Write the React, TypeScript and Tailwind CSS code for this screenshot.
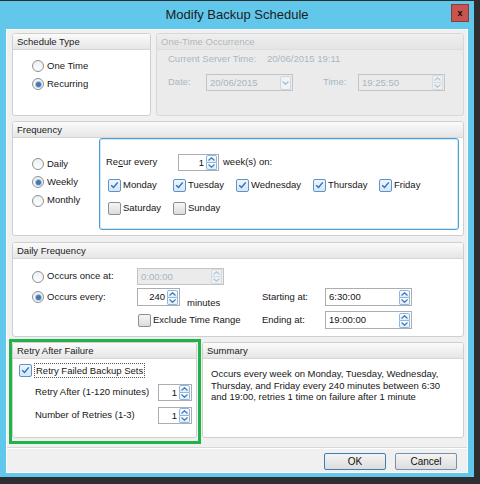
import { ReactNode } from 'react'

function Chevron({ up, color }: { up?: boolean; color: string }) {
  return (
    <svg width="7" height="4" viewBox="0 0 7 4" className="block">
      <path
        d={up ? 'M0.5 3.5 L3.5 0.7 L6.5 3.5' : 'M0.5 0.5 L3.5 3.3 L6.5 0.5'}
        fill="none"
        stroke={color}
        strokeWidth="1.2"
      />
    </svg>
  )
}

function Spin({ disabled }: { disabled?: boolean }) {
  const color = disabled ? '#b8c8d8' : '#3d7cc2'
  const box = disabled
    ? 'border-[#d3dbe3] bg-[#eef0f2]'
    : 'border-[#8fb6dc] bg-linear-to-b from-white to-[#e2edf8]'
  return (
    <div className="flex flex-col w-[11px] h-[15px] mr-px shrink-0">
      <div className={`flex-1 flex items-center justify-center border rounded-t-[2px] ${box}`}>
        <Chevron up color={color} />
      </div>
      <div className={`flex-1 flex items-center justify-center border border-t-0 rounded-b-[2px] ${box}`}>
        <Chevron color={color} />
      </div>
    </div>
  )
}

function Field({
  value,
  className,
  right,
  disabled,
  dropdown,
}: {
  value: string
  className: string
  right?: boolean
  disabled?: boolean
  dropdown?: boolean
}) {
  return (
    <div
      className={`flex items-center border shrink-0 ${
        disabled ? 'bg-[#ebebeb] border-[#c4c4c4] text-[#a9b5c1]' : 'bg-white border-[#abadb3] text-[#111]'
      } ${className}`}
    >
      <span className={`flex-1 leading-[12px] ${right ? 'text-right pr-[2px]' : 'pl-[3px]'}`}>{value}</span>
      {dropdown ? (
        <div className="flex items-center justify-center w-[11px] h-[14px] mr-px border border-[#c9d8e6] rounded-[2px] bg-[#f1f4f7]">
          <Chevron color="#a9bccf" />
        </div>
      ) : (
        <Spin disabled={disabled} />
      )}
    </div>
  )
}

function Radio({ checked }: { checked?: boolean }) {
  return (
    <span className="flex items-center justify-center w-[12px] h-[12px] rounded-full border border-[#8b9096] bg-linear-to-b from-[#f0f0f0] to-[#fdfdfd] shrink-0">
      {checked && <span className="w-[5px] h-[5px] rounded-full bg-[#4478ad] ring-1 ring-[#a9c6e2]" />}
    </span>
  )
}

function Check({ checked }: { checked?: boolean }) {
  return (
    <span
      className={`flex items-center justify-center w-[13px] h-[13px] rounded-[2px] border shrink-0 ${
        checked
          ? 'border-[#5e93c9] bg-linear-to-b from-[#eef5fc] to-[#d6e7f7]'
          : 'border-[#8e8f90] bg-linear-to-b from-[#f6f6f6] to-[#dcdcdc]'
      }`}
    >
      {checked && (
        <svg width="9" height="8" viewBox="0 0 9 8">
          <path d="M1.2 4.2 L3.5 6.4 L7.8 1.4" fill="none" stroke="#2c6fba" strokeWidth="1.4" />
        </svg>
      )}
    </span>
  )
}

function Box({
  title,
  className,
  disabled,
  children,
}: {
  title: string
  className: string
  disabled?: boolean
  children?: ReactNode
}) {
  return (
    <div
      className={`flex flex-col border rounded-[3px] overflow-hidden shrink-0 ${
        disabled ? 'border-[#d8d8d8] bg-[#ebebeb]' : 'border-[#cfcfcf] bg-white'
      } ${className}`}
    >
      <div
        className={`h-[16px] shrink-0 px-[4px] leading-[15px] border-b ${
          disabled
            ? 'border-[#dedede] bg-linear-to-b from-[#efefef] to-[#e4e4e4] text-[#b0b8c0]'
            : 'border-[#d6d6d6] bg-linear-to-b from-[#fbfbfb] to-[#e6e6e6] text-[#1b1b1b]'
        }`}
      >
        {title}
      </div>
      {children}
    </div>
  )
}

const days = [
  { name: 'Monday', on: true, w: 'w-[65px]' },
  { name: 'Tuesday', on: true, w: 'w-[63px]' },
  { name: 'Wednesday', on: true, w: 'w-[77px]' },
  { name: 'Thursday', on: true, w: 'w-[66px]' },
  { name: 'Friday', on: true, w: '' },
]

export default function App() {
  return (
    <div className="w-[480px] h-[484px] bg-[#2e2e30] pt-px font-['Liberation_Sans',Arial,sans-serif] text-[9.5px] text-[#161616]">
      <div className="w-[474px] h-[476px] bg-[#62c8eb] flex flex-col">
        {/* title bar */}
        <div className="h-[28px] grid grid-cols-[1fr_auto_1fr] items-start shrink-0">
          <div />
          <div className="mt-[6px] text-[13px] leading-[16px] text-[#1c1c1c]">Modify Backup Schedule</div>
          <div className="flex justify-end pr-[5px] pt-[3px]">
            <div className="w-[18px] h-[18px] border border-[#8e3a37] bg-[#c75450] flex items-center justify-center text-[9px] font-bold leading-none text-[#1a0505]">
              x
            </div>
          </div>
        </div>

        {/* client area */}
        <div className="mx-[6px] h-[444px] border border-white bg-[#f0f0f0] flex flex-col">
          <div className="flex flex-col gap-[5px] pl-[5px] pt-[3px]">
            {/* row 1 */}
            <div className="flex gap-[5px]">
              <Box title="Schedule Type" className="w-[139px] h-[83px]">
                <div className="flex flex-col pt-[7px] pl-[19px]">
                  <div className="flex items-center h-[18px] gap-[3px]">
                    <Radio />
                    <span>One Time</span>
                  </div>
                  <div className="flex items-center h-[18px] gap-[3px]">
                    <Radio checked />
                    <span>Recurring</span>
                  </div>
                </div>
              </Box>
              <Box title="One-Time Occurrence" disabled className="w-[308px] h-[83px]">
                <div className="flex flex-col pl-[11px] pt-[3px] text-[#a9b7c5]">
                  <div className="flex h-[12px] leading-[12px]">
                    <span className="w-[99px]">Current Server Time:</span>
                    <span>20/06/2015 19:11</span>
                  </div>
                  <div className="flex items-center h-[17px] mt-[9px]">
                    <span className="w-[38px]">Date:</span>
                    <Field value="20/06/2015" disabled dropdown className="w-[87px] h-[17px]" />
                    <span className="ml-[30px] w-[35px]">Time:</span>
                    <Field value="19:25:50" disabled className="w-[87px] h-[17px]" />
                  </div>
                </div>
              </Box>
            </div>

            {/* frequency */}
            <Box title="Frequency" className="w-[452px] h-[115px]">
              <div className="flex flex-1 pb-[5px] pr-[4px]">
                <div className="w-[86px] flex flex-col pl-[19px] pt-[17px]">
                  <div className="flex items-center h-[18px] gap-[3px]">
                    <Radio />
                    <span>Daily</span>
                  </div>
                  <div className="flex items-center h-[18px] gap-[3px]">
                    <Radio checked />
                    <span>Weekly</span>
                  </div>
                  <div className="flex items-center h-[19px] gap-[3px]">
                    <Radio />
                    <span>Monthly</span>
                  </div>
                </div>
                <div className="flex-1 border border-[#4f9fd6] rounded-[3px] shadow-[inset_0_0_0_1px_#cfe6f6] flex flex-col pl-[6px] pt-[15px]">
                  <div className="flex items-center h-[17px]">
                    <span className="w-[72px]">
                      Re<span className="underline">c</span>ur every
                    </span>
                    <Field value="1" right className="w-[41px] h-[17px]" />
                    <span className="ml-[4px]">week(s) on:</span>
                  </div>
                  <div className="flex flex-col gap-[5px] mt-[5px] pl-[2px]">
                    <div className="flex items-center h-[18px]">
                      {days.map((d) => (
                        <div key={d.name} className={`flex items-center gap-[2px] ${d.w}`}>
                          <Check checked={d.on} />
                          <span>{d.name}</span>
                        </div>
                      ))}
                    </div>
                    <div className="flex items-center h-[18px]">
                      <div className="flex items-center gap-[2px] w-[65px]">
                        <Check />
                        <span>Saturday</span>
                      </div>
                      <div className="flex items-center gap-[2px]">
                        <Check />
                        <span>Sunday</span>
                      </div>
                    </div>
                  </div>
                </div>
              </div>
            </Box>

            {/* daily frequency */}
            <Box title="Daily Frequency" className="w-[452px] h-[95px] mt-px">
              <div className="flex flex-col pl-[19px]">
                <div className="flex items-center h-[17px] mt-[9px]">
                  <div className="flex items-center gap-[3px] w-[105px]">
                    <Radio />
                    <span>Occurs once at:</span>
                  </div>
                  <Field value="0:00:00" disabled className="w-[87px] h-[17px]" />
                </div>
                <div className="flex items-center h-[18px] mt-[3px]">
                  <div className="flex w-[230px] h-full items-center">
                    <div className="flex items-center gap-[3px] w-[105px]">
                      <Radio checked />
                      <span>Occurs every:</span>
                    </div>
                    <Field value="240" right className="w-[43px] h-[18px]" />
                    <span className="ml-[7px] self-start mt-[9px] leading-[12px]">minutes</span>
                  </div>
                  <span className="w-[63px]">Starting at:</span>
                  <Field value="6:30:00" className="w-[87px] h-[18px]" />
                </div>
                <div className="flex items-center h-[18px] mt-[5px]">
                  <div className="flex w-[230px] items-center pl-[106px] gap-[2px]">
                    <Check />
                    <span>Exclude Time Range</span>
                  </div>
                  <span className="w-[63px]">Ending at:</span>
                  <Field value="19:00:00" className="w-[87px] h-[18px]" />
                </div>
              </div>
            </Box>

            {/* retry + summary */}
            <div className="flex gap-[5px]">
              <div className="relative">
                <Box title="Retry After Failure" className="w-[185px] h-[96px]">
                  <div className="flex flex-col pl-[6px]">
                    <div className="flex items-center h-[16px] mt-[3px] gap-[2px]">
                      <Check checked />
                      <span className="border border-dotted border-[#555] px-px leading-[13px]">
                        Retry Failed Backup Sets
                      </span>
                    </div>
                    <div className="flex items-center h-[17px] mt-[6px] pl-[16px]">
                      <span className="w-[123px]">Retry After (1-120 minutes)</span>
                      <Field value="1" right className="w-[34px] h-[17px]" />
                    </div>
                    <div className="flex items-center h-[17px] mt-[6px] pl-[16px]">
                      <span className="w-[123px]">Number of Retries (1-3)</span>
                      <Field value="1" right className="w-[34px] h-[17px]" />
                    </div>
                  </div>
                </Box>
                <div className="absolute -left-[3px] -top-[3px] -right-[4px] -bottom-[6px] border-[3px] border-[#22b24c] pointer-events-none" />
              </div>
              <Box title="Summary" className="w-[262px] h-[96px]">
                <div className="flex flex-col pl-[8px] pt-[9px] leading-[11.5px]">
                  <span>Occurs every week on Monday, Tuesday, Wednesday,</span>
                  <span>Thursday, and Friday every 240 minutes between 6:30</span>
                  <span>and 19:00, retries 1 time on failure after 1 minute</span>
                </div>
              </Box>
            </div>
          </div>

          {/* buttons */}
          <div className="mt-[9px] flex-1 border-t border-[#d8d8d8] shadow-[inset_0_1px_0_#ffffff] flex justify-end items-start gap-[9px] pr-[10px] pt-[5px]">
            <button className="w-[62px] h-[17px] border border-[#3c7fb1] rounded-[2px] bg-linear-to-b from-[#f4f4f4] to-[#dddddd] text-[10px] leading-[15px] text-[#111]">
              OK
            </button>
            <button className="w-[62px] h-[17px] border border-[#7590b0] rounded-[2px] bg-linear-to-b from-[#f4f4f4] to-[#dddddd] text-[10px] leading-[15px] text-[#111]">
              Cancel
            </button>
          </div>
        </div>
      </div>
    </div>
  )
}
